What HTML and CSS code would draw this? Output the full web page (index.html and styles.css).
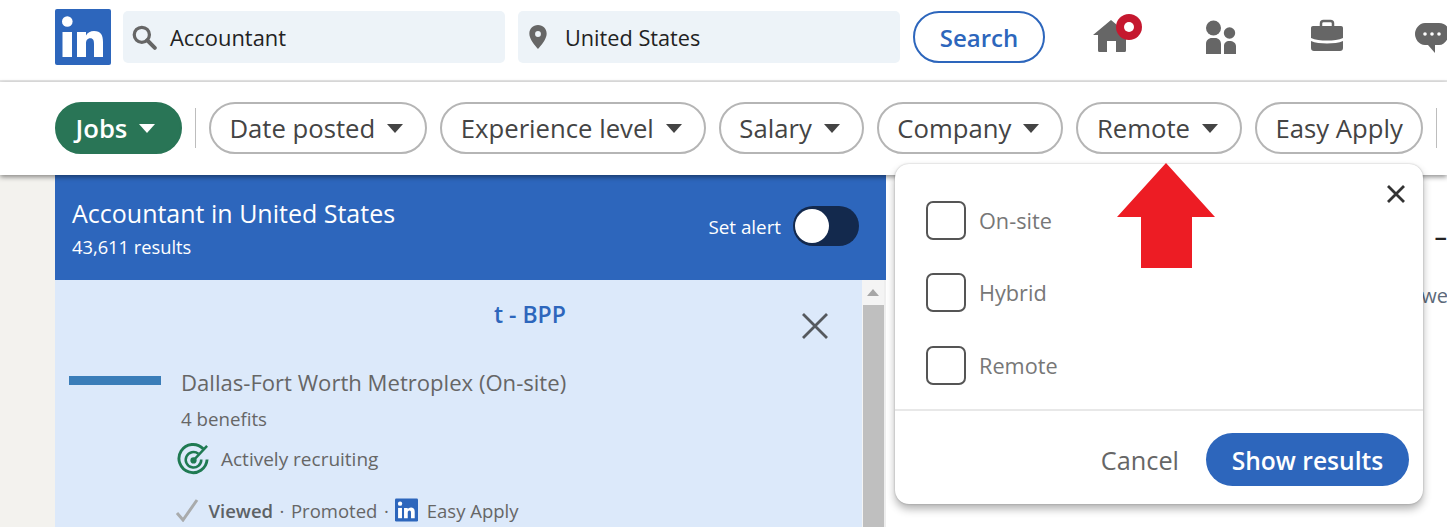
FILE: index.html
```html
<!DOCTYPE html>
<html lang="en">
<head>
<meta charset="utf-8">
<title>Accountant jobs</title>
<link rel="stylesheet" href="styles.css">
</head>
<body>
<div class="page">
  <header class="topbar">
    <svg class="logo" viewBox="0 0 56 56"><rect width="56" height="56" rx="2" fill="#2d66bc"/><circle cx="12.300" cy="12.500" r="5.300" fill="#fff"/><rect x="7.500" y="23" width="9.500" height="25" fill="#fff"/><path fill="#fff" d="M22 23h9v3.400c1.500-2.600 4.400-4.300 8-4.300 7 0 9 4.300 9 11V48h-9V35c0-3.500-.8-5.700-3.700-5.700-3 0-4.300 2.200-4.300 5.700v13h-9z"/></svg>
    <div class="field field-search">
      <svg class="field-icon" viewBox="0 0 24 24"><circle cx="10" cy="10" r="7" fill="none" stroke="#666" stroke-width="3"/><path d="M15 15l7 7" stroke="#666" stroke-width="3.600" stroke-linecap="round"/></svg>
      <span>Accountant</span>
    </div>
    <div class="field field-loc">
      <svg class="field-icon pin" viewBox="0 0 24 24"><path fill="#666" fill-rule="evenodd" d="M12 1c-4.700 0-8 3.400-8 8 0 5 5 10.500 8 14 3-3.500 8-9 8-14 0-4.600-3.300-8-8-8zm0 5.500a2.700 2.700 0 1 1 0 5.400 2.700 2.700 0 0 1 0-5.400z"/></svg>
      <span>United States</span>
    </div>
    <button class="search-btn">Search</button>
    <nav class="nav">
      <div class="nav-item">
        <svg viewBox="0 0 36 33" class="nav-svg home"><path fill="#666" d="M0 16L18 1l18 15h-3v15.500a1.500 1.500 0 0 1-1.500 1.500H23V22h-9v11H6.500A1.500 1.500 0 0 1 5 31.500V16z"/></svg>
        <svg class="badge" viewBox="0 0 26 26"><circle cx="13" cy="13" r="13" fill="#c5182f"/><circle cx="13" cy="13" r="5" fill="#fff"/></svg>
      </div>
      <div class="nav-item">
        <svg viewBox="0 0 32 34" class="nav-svg people"><circle cx="8.500" cy="8" r="7.500" fill="#666"/><circle cx="24.500" cy="13" r="5.700" fill="#666"/><path fill="#666" d="M1 34V24c0-3.500 2.500-6 6-6h3c3.500 0 6 2.500 6 6v10zM19 34V26c0-3 2-5 5.500-5s6.500 2 6.500 5v8z"/></svg>
      </div>
      <div class="nav-item">
        <svg viewBox="0 0 34 32" class="nav-svg case"><path fill="none" stroke="#666" stroke-width="2.500" d="M11 7V4.500C11 3 12 2 13.500 2h7C22 2 23 3 23 4.500V7"/><path fill="#666" d="M3 7h28c1.200 0 2 .8 2 2v10c-4 2-10 2.500-16 2.500S5 21 1 19V9c0-1.200.8-2 2-2zM1 22c4 1.800 10 2.500 16 2.500S29 23.800 33 22v7c0 1.800-1.200 3-3 3H4c-1.800 0-3-1.200-3-3z"/></svg>
      </div>
      <div class="nav-item">
        <svg viewBox="0 0 34 30" class="nav-svg chat"><path fill="#666" d="M10 0h14c6 0 10 4 10 9.500S30 22 24 22h-4v8l-7-8h-3C4 22 0 16 0 11S4 0 10 0z"/><circle cx="10" cy="11" r="1.800" fill="#fff"/><circle cx="17" cy="11" r="1.800" fill="#fff"/><circle cx="24" cy="11" r="1.800" fill="#fff"/></svg>
      </div>
    </nav>
  </header>

  <div class="filters">
    <button class="chip chip-jobs">Jobs<i class="caret"></i></button>
    <span class="sep"></span>
    <button class="chip">Date posted<i class="caret"></i></button>
    <button class="chip">Experience level<i class="caret"></i></button>
    <button class="chip">Salary<i class="caret"></i></button>
    <button class="chip">Company<i class="caret"></i></button>
    <button class="chip">Remote<i class="caret"></i></button>
    <button class="chip">Easy Apply</button>
    <span class="sep"></span>
  </div>

  <main class="content">
    <section class="list">
      <div class="list-head">
        <div>
          <h1 class="list-title">Accountant in United States</h1>
          <p class="list-count">43,611 results</p>
        </div>
        <div class="alert">
          <span class="alert-label">Set alert</span>
          <span class="toggle"><span class="knob"></span></span>
        </div>
      </div>
      <div class="list-body">
        <article class="job">
          <div class="job-top">
            <span class="job-title">t - BPP</span>
            <svg class="job-x" viewBox="0 0 28 28"><path d="M2 2l24 24M26 2L2 26" stroke="#55595e" stroke-width="2.800"/></svg>
          </div>
          <div class="job-main">
            <span class="job-logo"></span>
            <div class="job-info">
              <div class="job-loc">Dallas-Fort Worth Metroplex (On-site)</div>
              <div class="job-benefits">4 benefits</div>
              <div class="job-active">
                <svg class="target" viewBox="0 0 34 34"><path fill="none" stroke="#1f7a52" stroke-width="3" d="M27 6A14.500 14.500 0 1 0 31 17"/><path fill="none" stroke="#1f7a52" stroke-width="2.600" d="M22 11A8 8 0 1 0 25 17"/><circle cx="17" cy="18" r="3.200" fill="#1f7a52"/><path d="M17 18L31 3" stroke="#1f7a52" stroke-width="2.600"/></svg>
                <span>Actively recruiting</span>
              </div>
              <div class="job-meta">
                <svg class="check" viewBox="0 0 24 24"><path d="M2 15l6 7L22 2" fill="none" stroke="#a9abac" stroke-width="3"/></svg>
                <b>Viewed</b><span>·</span><span>Promoted</span><span>·</span>
                <svg class="mini-in" viewBox="0 0 56 56"><rect width="56" height="56" rx="3" fill="#2d66bc"/><circle cx="12.300" cy="12.500" r="5.300" fill="#fff"/><rect x="7.500" y="23" width="9.500" height="25" fill="#fff"/><path fill="#fff" d="M22 23h9v3.400c1.500-2.600 4.400-4.300 8-4.300 7 0 9 4.300 9 11V48h-9V35c0-3.500-.8-5.700-3.700-5.700-3 0-4.300 2.200-4.300 5.700v13h-9z"/></svg>
                <span>Easy Apply</span>
              </div>
            </div>
          </div>
        </article>
        <div class="scrollbar"><i class="scroll-up"></i><i class="scroll-thumb"></i></div>
      </div>
    </section>
    <section class="detail">
      <div class="detail-title">–</div>
      <div class="detail-sub">we</div>
    </section>
  </main>

  <div class="popover">
    <svg class="pop-x" viewBox="0 0 20 20"><path d="M2 2l16 16M18 2L2 18" stroke="#333" stroke-width="2.800"/></svg>
    <div class="options">
      <label class="option"><span class="box"></span>On-site</label>
      <label class="option"><span class="box"></span>Hybrid</label>
      <label class="option"><span class="box"></span>Remote</label>
    </div>
    <div class="pop-foot">
      <span class="cancel">Cancel</span>
      <button class="show">Show results</button>
    </div>
  </div>

  <svg class="arrow" viewBox="0 0 100 105"><path fill="#ed1c24" d="M50 0l49 54H76v51H25V54H1z"/></svg>
</div>
</body>
</html>
```
FILE: styles.css
```css
* { box-sizing: border-box; }
html, body { margin: 0; padding: 0; }
body { font-family: "Open Sans", "Noto Sans", sans-serif; background: #fff; }
button { font-family: inherit; cursor: pointer; }
.page { position: relative; width: 1447px; height: 527px; overflow: hidden; background: #fff; }

.topbar { height: 82px; display: flex; align-items: flex-start; padding: 9px 0 0 55px; border-bottom: 2px solid #e8e8e8; }
.logo { width: 56px; height: 56px; flex: none; margin-right: 12px; }
.field { height: 52px; margin-top: 2px; background: #edf3f8; border-radius: 5px; display: flex; align-items: center; color: #222; font-size: 21.900px; flex: none; width: 382px; }
.field-search { margin-right: 13px; padding-left: 8px; }
.field-loc { margin-right: 13px; padding-left: 7px; font-size: 21.700px; }
.field-icon { width: 26px; height: 26px; flex: none; margin-right: 13px; }
.pin { margin-right: 14px; }
.search-btn { width: 132px; height: 52px; margin-top: 2px; flex: none; background: #fff; border: 2px solid #2d66bc; border-radius: 26px; color: #2d66bc; font-size: 24px; font-weight: 600; padding: 0; }
.nav { display: flex; flex: none; margin-left: 33px; }
.nav-item { position: relative; width: 107px; height: 54px; display: flex; align-items: flex-start; }
.nav-svg { display: block; }
.home { width: 36px; height: 33px; margin-left: 15px; margin-top: 10px; }
.badge { position: absolute; left: 38px; top: 5px; width: 26px; height: 26px; }
.people { width: 32px; height: 34px; margin-left: 20px; margin-top: 11px; }
.case { width: 34px; height: 32px; margin-left: 18px; margin-top: 10px; }
.chat { width: 34px; height: 30px; margin-left: 16px; margin-top: 14px; }

.filters { height: 93px; display: flex; align-items: center; gap: 13px; padding: 0 0 1px 55px; background: #fff; position: relative; z-index: 2; box-shadow: 0 2px 5px rgba(0,0,0,.45); }
.chip { flex: none; height: 52px; border: 2px solid #b5b5b5; border-radius: 26px; background: #fff; color: #444; font-size: 25.700px; font-weight: 500; padding: 0 18.500px; display: flex; align-items: center; gap: 12px; white-space: nowrap; }
.chip-jobs { background: #297556; border-color: #297556; color: #fff; font-weight: 600; }
.caret { width: 0; height: 0; border-left: 8px solid transparent; border-right: 8px solid transparent; border-top: 9px solid #444; flex: none; margin-right: 3.500px; }
.chip-jobs .caret { border-top-color: #fff; margin-right: 6px; }
.sep { width: 1px; height: 40px; background: #bdbdbd; flex: none; }

.content { height: 352px; display: flex; padding-left: 55px; background: linear-gradient(to right, #f3f2ee 55px, #fff 55px); overflow: hidden; }
.list { width: 831px; flex: none; display: flex; flex-direction: column; }
.list-head { height: 105px; flex: none; background: #2d66bc; color: #fff; display: flex; justify-content: space-between; align-items: flex-start; padding: 23px 27px 0 17px; }
.list-title { margin: 0; font-size: 25px; font-weight: 400; line-height: 30px; }
.list-count { margin: 7px 0 0; font-size: 18.300px; line-height: 24px; }
.alert { display: flex; align-items: center; gap: 12px; font-size: 18.800px; margin-top: 8px; }
.alert-label { padding-top: 2px; }
.toggle { width: 66px; height: 40px; border-radius: 20px; background: #13294d; display: flex; align-items: center; padding-left: 2px; }
.knob { width: 34px; height: 34px; border-radius: 50%; background: #fff; }
.list-body { flex: 1; display: flex; min-height: 0; }

.job { flex: 1; background: #dce9fa; padding: 16px 0 0 14px; color: #666; }
.job-top { display: flex; height: 62px; position: relative; }
.job-title { margin-left: 425px; font-size: 23px; font-weight: 600; color: #2d66bc; line-height: 36px; }
.job-x { width: 28px; height: 28px; position: absolute; left: 732px; top: 16px; }
.job-main { display: flex; align-items: flex-start; margin-top: 9px; }
.job-logo { width: 92px; height: 9px; background: #3a7db8; margin-top: 9px; flex: none; }
.job-info { margin-left: 20px; }
.job-loc { font-size: 22.100px; line-height: 30px; }
.job-benefits { font-size: 18.700px; line-height: 26px; margin-top: 9px; }
.job-active { display: flex; align-items: center; gap: 11px; font-size: 19px; margin-top: 7px; margin-left: -4px; height: 40px; }
.target { width: 33px; height: 33px; flex: none; }
.job-meta { display: flex; align-items: center; gap: 6.500px; font-size: 18.500px; height: 34px; margin-top: 14px; margin-left: -6px; }
.job-meta b { font-weight: 600; margin-left: 3px; color: #5d6266; }
.check { width: 24px; height: 24px; }
.mini-in { width: 23px; height: 24px; margin-right: 2px; }

.scrollbar { width: 24px; flex: none; background: #f4f4f4; display: flex; flex-direction: column; align-items: center; padding-top: 9px; border-right: 2px solid #eee; }
.scroll-up { width: 0; height: 0; border-left: 6px solid transparent; border-right: 6px solid transparent; border-bottom: 7px solid #a6a6a6; flex: none; }
.scroll-thumb { width: 21px; flex: 1; background: #bfbfbf; margin-top: 9px; }

.detail { flex: 1; position: relative; color: #222; }
.detail-title { text-align: right; font-size: 25px; font-weight: 600; line-height: 30px; margin-top: 46px; }
.detail-sub { text-align: right; font-size: 20px; line-height: 28px; margin-top: 31px; color: #5d6a7a; margin-right: -1px; }

.popover { position: absolute; left: 895px; top: 164px; width: 528px; height: 340px; background: #fff; border-radius: 14px; box-shadow: 0 0 2px rgba(0,0,0,.25), 0 5px 8px rgba(0,0,0,.3); z-index: 3; display: flex; flex-direction: column; }
.pop-x { position: absolute; left: 491px; top: 20px; width: 20px; height: 20px; }
.options { height: 247px; flex: none; display: flex; flex-direction: column; gap: 32.500px; padding: 36px 0 0 31px; border-bottom: 2px solid #e8e8e8; }
.option { display: flex; align-items: center; gap: 13px; height: 40px; color: #777; font-size: 21.700px; }
.box { width: 40px; height: 39px; border: 2px solid #555; border-radius: 7px; background: #fff; flex: none; }
.pop-foot { flex: 1; display: flex; justify-content: flex-end; align-items: flex-start; padding: 22px 14px 0 0; gap: 27px; }
.cancel { color: #666; font-size: 25.300px; font-weight: 500; line-height: 55px; }
.show { width: 203px; height: 53px; border: 0; border-radius: 27px; background: #2d66bc; color: #fff; font-size: 24.600px; font-weight: 600; padding: 2px 0 0; }

.arrow { position: absolute; left: 1116px; top: 163px; width: 100px; height: 105px; z-index: 4; }
```
